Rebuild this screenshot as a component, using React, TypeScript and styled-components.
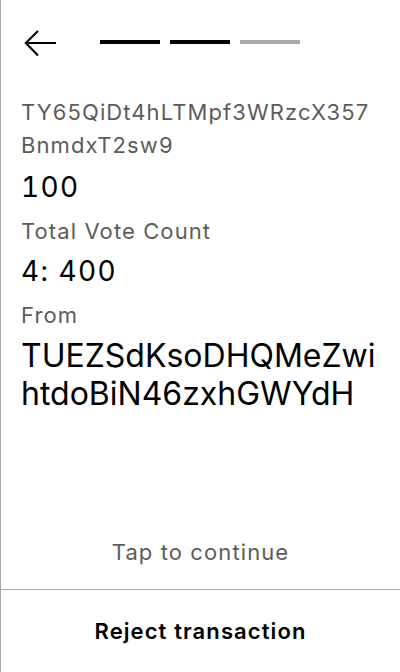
import React from "react";
import styled, { createGlobalStyle } from "styled-components";

const Global = createGlobalStyle`
  html, body { margin: 0; padding: 0; background: #fff; }
  body { font-family: Inter, "Noto Sans", sans-serif; -webkit-font-smoothing: antialiased; }
  * { box-sizing: border-box; }
`;

const Screen = styled.div`
  width: 400px;
  height: 672px;
  border-left: 1px solid #a8a8a8;
  display: flex;
  flex-direction: column;
  background: #fff;
  overflow: hidden;
`;

const Header = styled.div`
  display: flex;
  align-items: center;
  padding: 27px 0 0 23px;
  height: 59px;
`;

const BackButton = styled.button`
  width: 32px;
  height: 32px;
  padding: 0;
  border: none;
  background: none;
  display: flex;
  cursor: pointer;
`;

const Steps = styled.div`
  display: flex;
  gap: 10px;
  margin-left: 44px;
  margin-bottom: 2px;
`;

const Step = styled.div<{ $done: boolean }>`
  width: 60px;
  height: 4px;
  background: ${(p) => (p.$done ? "#000" : "#aaaaaa")};
`;

const Content = styled.div`
  flex: 1;
  display: flex;
  flex-direction: column;
  padding: 0 20px;
`;

const Label = styled.div<{ $mt: number }>`
  margin-top: ${(p) => p.$mt}px;
  font-size: 22px;
  line-height: 33px;
  letter-spacing: 1.1px;
  color: #5c5c5c;
  word-break: break-all;
`;

const Value = styled.div<{ $mt: number }>`
  margin-top: ${(p) => p.$mt}px;
  font-size: 28px;
  line-height: 34px;
  letter-spacing: 1.4px;
  font-variant-numeric: tabular-nums;
  color: #000;
`;

const BigValue = styled.div<{ $mt: number }>`
  margin-top: ${(p) => p.$mt}px;
  font-size: 32px;
  line-height: 38px;
  color: #000;
  word-break: break-all;
`;

const Hint = styled.div`
  font-size: 22px;
  line-height: 32px;
  letter-spacing: 1.1px;
  color: #5c5c5c;
  text-align: center;
  margin-bottom: 21px;
`;

const Footer = styled.button`
  height: 83px;
  flex: none;
  border: none;
  border-top: 1px solid #a8a8a8;
  background: #fff;
  font-family: Inter, "Noto Sans", sans-serif;
  font-size: 22px;
  font-weight: 600;
  letter-spacing: 1.1px;
  color: #000;
  cursor: pointer;
  padding: 0;
`;

const Arrow = () => (
  <svg width="32" height="32" viewBox="0 0 32 32" fill="none">
    <path d="M32 16H1.5M14 4L1.8 16L14 28.5" stroke="#000" strokeWidth="2.1" />
  </svg>
);

export default function App() {
  return (
    <>
      <Global />
      <Screen>
        <Header>
          <BackButton aria-label="Back">
            <Arrow />
          </BackButton>
          <Steps>
            <Step $done />
            <Step $done />
            <Step $done={false} />
          </Steps>
        </Header>
        <Content>
          <Label $mt={37}>TY65QiDt4hLTMpf3WRzcX357BnmdxT2sw9</Label>
          <Value $mt={8}>100</Value>
          <Label $mt={11}>Total Vote Count</Label>
          <Value $mt={6}>4: 400</Value>
          <Label $mt={11}>From</Label>
          <BigValue $mt={5}>TUEZSdKsoDHQMeZwihtdoBiN46zxhGWYdH</BigValue>
        </Content>
        <Hint>Tap to continue</Hint>
        <Footer>Reject transaction</Footer>
      </Screen>
    </>
  );
}
